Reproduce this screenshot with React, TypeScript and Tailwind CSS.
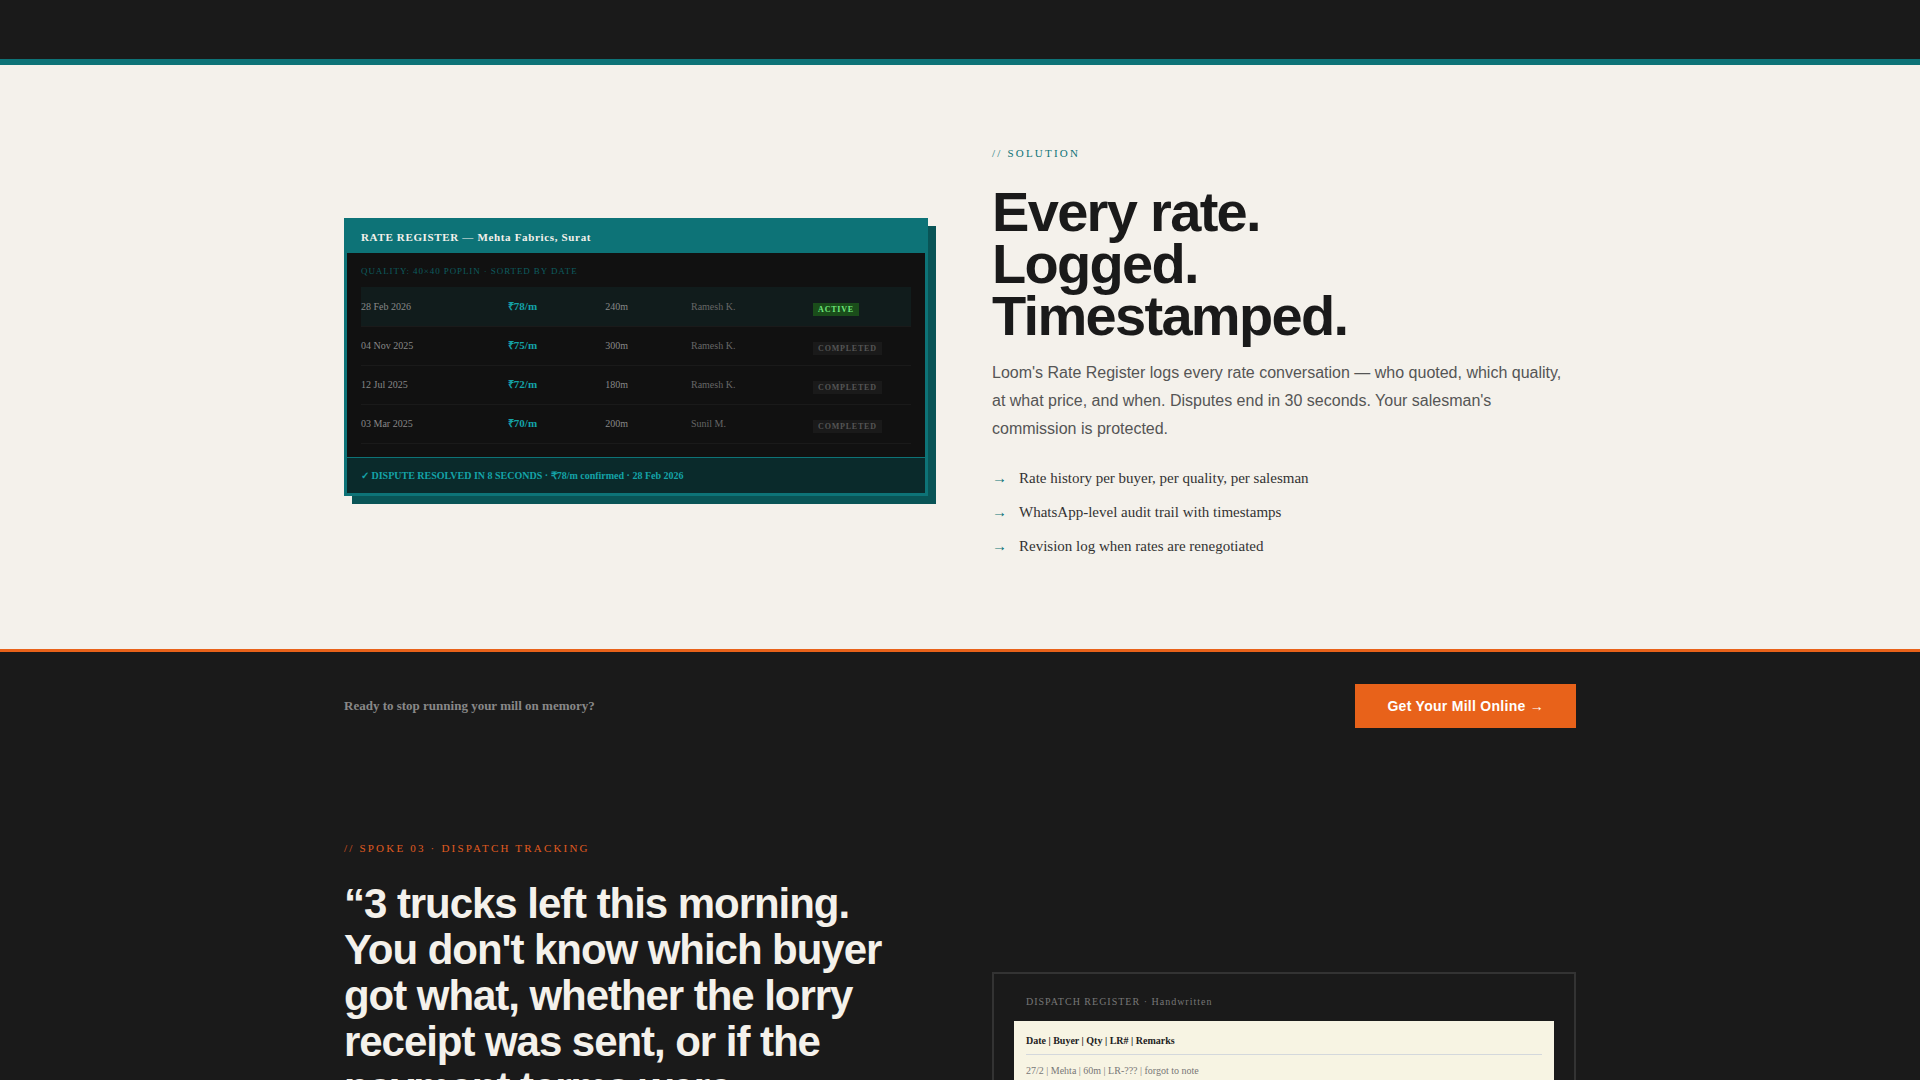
const rates = [
  { date: "28 Feb 2026", rate: "₹78/m", qty: "240m", person: "Ramesh K.", active: true },
  { date: "04 Nov 2025", rate: "₹75/m", qty: "300m", person: "Ramesh K.", active: false },
  { date: "12 Jul 2025", rate: "₹72/m", qty: "180m", person: "Ramesh K.", active: false },
  { date: "03 Mar 2025", rate: "₹70/m", qty: "200m", person: "Sunil M.", active: false },
];

const features = [
  "Rate history per buyer, per quality, per salesman",
  "WhatsApp-level audit trail with timestamps",
  "Revision log when rates are renegotiated",
];

const RateRegister = () => {
  return (
    <div className="border-3 border-[#0d7377] bg-[#111] shadow-[8px_8px_0_#095456]">
      <div className="bg-[#0d7377] px-3.5 py-2 text-[11px] leading-4 font-bold tracking-[0.06em] text-[#f4f1eb]">
        RATE REGISTER — Mehta Fabrics, Surat
      </div>
      <div className="px-3.5 pt-3 pb-[13px]">
        <div className="mb-2.5 text-[9px] leading-3 tracking-[0.1em] text-[#0d5c5f]">
          QUALITY: 40×40 POPLIN · SORTED BY DATE
        </div>
        <table className="w-full table-fixed border-collapse text-left text-[10px] leading-4">
          <colgroup>
            <col className="w-[26.7%]" />
            <col className="w-[17.7%]" />
            <col className="w-[15.6%]" />
            <col className="w-[22.2%]" />
            <col className="w-[17.8%]" />
          </colgroup>
          <tbody>
            {rates.map((row) => (
              <tr
                key={row.date}
                className={
                  row.active
                    ? "h-[39px] border-b border-[#1a1a1a] bg-[#111c1c]"
                    : "h-[39px] border-b border-[#1a1a1a]"
                }
              >
                <td className="text-[#888]">{row.date}</td>
                <td className="pb-0.5 text-[11px] font-bold text-[#14a3a8]">{row.rate}</td>
                <td className="text-[#888]">{row.qty}</td>
                <td className="text-[#666]">{row.person}</td>
                <td className="pt-1">
                  <span
                    className={
                      row.active
                        ? "inline-block bg-[#1a4d1a] px-[5px] text-[8px] leading-[13px] font-bold tracking-[0.1em] text-[#6ee77a]"
                        : "inline-block bg-[#1a1a1a] px-[5px] text-[8px] leading-[13px] font-bold tracking-[0.1em] text-[#555]"
                    }
                  >
                    {row.active ? "ACTIVE" : "COMPLETED"}
                  </span>
                </td>
              </tr>
            ))}
          </tbody>
        </table>
      </div>
      <div className="border-t border-[#0d7377] bg-[#0a2a2b] px-3.5 py-2.5 text-[10px] leading-[15px] font-bold text-[#14a3a8]">
        ✓ DISPUTE RESOLVED IN 8 SECONDS · ₹78/m confirmed · 28 Feb 2026
      </div>
    </div>
  );
};

const DispatchRegister = () => {
  return (
    <div className="border-2 border-[#333] p-5">
      <div className="px-3 pb-3 text-[10px] leading-[15px] tracking-[0.1em] text-[#777]">
        DISPATCH REGISTER · Handwritten
      </div>
      <div className="bg-[#f7f4e3] p-3 text-[10px] leading-[15px]">
        <div className="border-b border-[#d4d8dc] pb-1.5 font-bold text-[#222]">
          Date | Buyer | Qty | LR# | Remarks
        </div>
        <div className="py-2 text-[#777]">27/2 | Mehta | 60m | LR-??? | forgot to note</div>
      </div>
    </div>
  );
};

const App = () => {
  return (
    <main className="h-screen overflow-hidden bg-[#1a1a1a] font-['Liberation_Serif',serif]">
      <section className="mt-[59px] border-t-6 border-[#0d7377] bg-[#f4f1eb] py-20">
        <div className="mx-auto grid max-w-7xl grid-cols-1 items-center gap-16 px-6 md:grid-cols-2">
          <RateRegister />
          <div>
            <p className="mb-6 text-[11px] leading-[17px] tracking-[0.2em] text-[#0d7377]">// SOLUTION</p>
            <h2 className="mb-[17px] font-['Liberation_Sans',sans-serif] text-[56px] leading-[52px] font-bold tracking-[-0.03em] text-[#1a1a1a]">
              Every rate.
              <br />
              Logged.
              <br />
              Timestamped.
            </h2>
            <p className="mb-6 font-['Liberation_Sans',sans-serif] text-base leading-7 text-[#555]">
              Loom's Rate Register logs every rate conversation — who quoted, which quality, at what price,
              and when. Disputes end in 30 seconds. Your salesman's commission is protected.
            </p>
            <ul>
              {features.map((item) => (
                <li key={item} className="mb-3 flex gap-3 text-[15px] leading-[22px] text-[#333]">
                  <span className="text-[#0d7377]">→</span>
                  {item}
                </li>
              ))}
            </ul>
          </div>
        </div>
      </section>

      <section className="border-t-3 border-[#e8621a] py-8">
        <div className="mx-auto flex max-w-7xl items-center justify-between px-6">
          <p className="text-[13px] leading-5 font-bold text-[#888]">
            Ready to stop running your mill on memory?
          </p>
          <a
            href="#"
            className="bg-[#e8621a] px-8 py-3 font-['Liberation_Sans',sans-serif] text-sm font-bold tracking-[0.02em] text-white"
          >
            Get Your Mill Online →
          </a>
        </div>
      </section>

      <section className="py-20">
        <div className="mx-auto grid max-w-7xl grid-cols-1 gap-16 px-6 md:grid-cols-2">
          <div>
            <p className="mb-6 text-[11px] leading-[17px] tracking-[0.2em] text-[#e05a20]">
              // SPOKE 03 · DISPATCH TRACKING
            </p>
            <h2 className="font-['Liberation_Sans',sans-serif] text-[42px] leading-[46px] font-bold tracking-tight text-[#f4f1eb]">
              “3 trucks left this morning. You don't know which buyer got what, whether the lorry receipt was
              sent, or if the payment terms were
            </h2>
          </div>
          <div className="md:pt-33">
            <DispatchRegister />
          </div>
        </div>
      </section>
    </main>
  );
};

export default App;
